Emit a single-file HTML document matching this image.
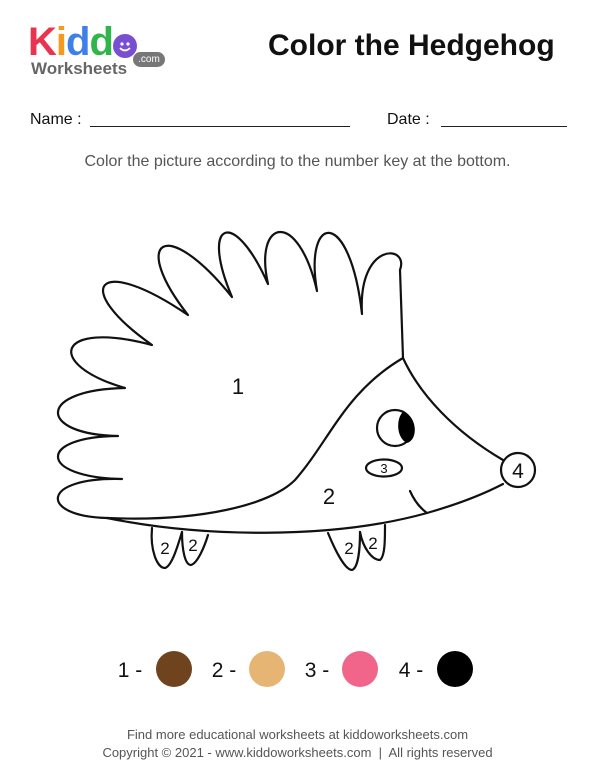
<!DOCTYPE html>
<html><head><meta charset="utf-8"><style>
body{margin:0;width:595px;height:770px;background:#fff;position:relative;font-family:"Liberation Sans",sans-serif;overflow:hidden}
.a{position:absolute;white-space:nowrap}
</style></head><body>
<div class="a" style="left:28px;top:22px;font-size:40px;font-weight:bold;letter-spacing:-1px;line-height:40px">
<span style="color:#e8344e">K</span><span style="color:#f39a1f">i</span><span style="color:#3f7fe8">d</span><span style="color:#2fb54a">d</span></div>
<div class="a" style="left:113px;top:34px;width:24px;height:24px;border-radius:50%;background:#7a4ed0"></div>
<svg class="a" style="left:113px;top:34px" width="24" height="24"><circle cx="9" cy="10" r="1.6" fill="#fff"/><circle cx="15" cy="10" r="1.6" fill="#fff"/><path d="M7 14 Q12 19 17 14" stroke="#fff" stroke-width="1.8" fill="none"/></svg>
<div class="a" style="left:31px;top:59px;font-size:17px;font-weight:bold;color:#666">Worksheets</div>
<div class="a" style="left:133px;top:52px;width:32px;height:15px;border-radius:8px;background:#777;color:#fff;font-size:10px;line-height:15px;text-align:center">.com</div>
<div class="a" style="left:268px;top:29px;font-size:30px;font-weight:bold;color:#111">Color the Hedgehog</div>
<div class="a" style="left:30px;top:111px;font-size:16px;color:#111">Name :</div>
<div class="a" style="left:90px;top:126px;width:260px;border-top:1.5px solid #222"></div>
<div class="a" style="left:387px;top:111px;font-size:16px;color:#111">Date :</div>
<div class="a" style="left:441px;top:126px;width:126px;border-top:1.5px solid #222"></div>
<div class="a" style="left:0;width:595px;text-align:center;top:153px;font-size:16px;color:#555">Color the picture according to the number key at the bottom.</div>
<svg class="a" style="left:0;top:0" width="595" height="770">
<g fill="none" stroke="#111" stroke-width="2.2" stroke-linecap="round" stroke-linejoin="round">
<path id="sp"/>
<path d="M107,518 C200,522 270,505 295,480 C330,440 345,392 403,358"/>
<path d="M403,358 C420,395 455,432 503,460"/>
<path d="M107,518 C200,537 330,540 427,513 C455,505 480,496 503,484"/>
<circle cx="518" cy="470" r="17" fill="#fff"/>
<path d="M410,491 C414,500 420,508 427,513"/>
<circle cx="395" cy="428" r="18"/>
<ellipse cx="384" cy="468" rx="18" ry="8.5"/>
<path d="M152,528 C150,550 157,568 165,568 C172,566 178,545 182,532"/>
<path d="M182,532 C182,550 185,565 191,565 C198,563 205,545 208,535"/>
<path d="M328,533 C335,550 345,570 352,570 C358,568 360,550 360,532"/>
<path d="M360,532 C363,548 372,560 380,560 C385,556 385,540 385,525"/>
</g>
<path d="M403,412 C418,417 418,440 407,443 C396,438 396,418 403,412Z" fill="#000"/>
<g font-family="Liberation Sans,sans-serif" fill="#111" text-anchor="middle">
<text x="238" y="394" font-size="22">1</text>
<text x="329" y="504" font-size="22">2</text>
<text x="518" y="478" font-size="21">4</text>
<text x="384" y="473" font-size="13">3</text>
<text x="165" y="554" font-size="17">2</text>
<text x="193" y="551" font-size="17">2</text>
<text x="349" y="554" font-size="17">2</text>
<text x="373" y="549" font-size="17">2</text>
<text x="130" y="677" font-size="21">1 -</text>
<text x="224" y="677" font-size="21">2 -</text>
<text x="317" y="677" font-size="21">3 -</text>
<text x="411" y="677" font-size="21">4 -</text>
</g>
<circle cx="174" cy="669" r="18" fill="#70431f"/>
<circle cx="267" cy="669" r="18" fill="#e6b574"/>
<circle cx="360" cy="669" r="18" fill="#f2658a"/>
<circle cx="455" cy="669" r="18" fill="#000"/>
</svg>
<div class="a" style="left:0;width:595px;text-align:center;top:727px;font-size:13px;color:#555">Find more educational worksheets at kiddoworksheets.com</div>
<div class="a" style="left:0;width:595px;text-align:center;top:745px;font-size:13px;color:#555">Copyright © 2021 - www.kiddoworksheets.com &nbsp;|&nbsp; All rights reserved</div>
<script>
var V=[[107,518],[122,479],[118,436],[125,388],[152,345],[188,315],[232,297],[268,284],[317,291],[362,314],[400,270]];
var T=[[58,497],[58,457],[58,412],[72,348],[105,285],[163,247],[225,233],[280,232],[330,233],[383,255]];
var d="M"+V[0];
for(var i=0;i<10;i++){var A=V[i],B=V[i+1],t=T[i];var mx=(A[0]+B[0])/2,my=(A[1]+B[1])/2;var dx=t[0]-mx,dy=t[1]-my;var L=Math.hypot(dx,dy);var px=-dy/L,py=dx/L;var w=Math.hypot(B[0]-A[0],B[1]-A[1])*0.38+4;
var bx=t[0]+dx/3,by=t[1]+dy/3;
var s=((A[0]-mx)*px+(A[1]-my)*py)>0?1:-1;
d+=" C"+(bx+s*px*w)+","+(by+s*py*w)+" "+(bx-s*px*w)+","+(by-s*py*w)+" "+B;}
d+=" L403,358";
document.getElementById("sp").setAttribute("d",d);
</script>
</body></html>
